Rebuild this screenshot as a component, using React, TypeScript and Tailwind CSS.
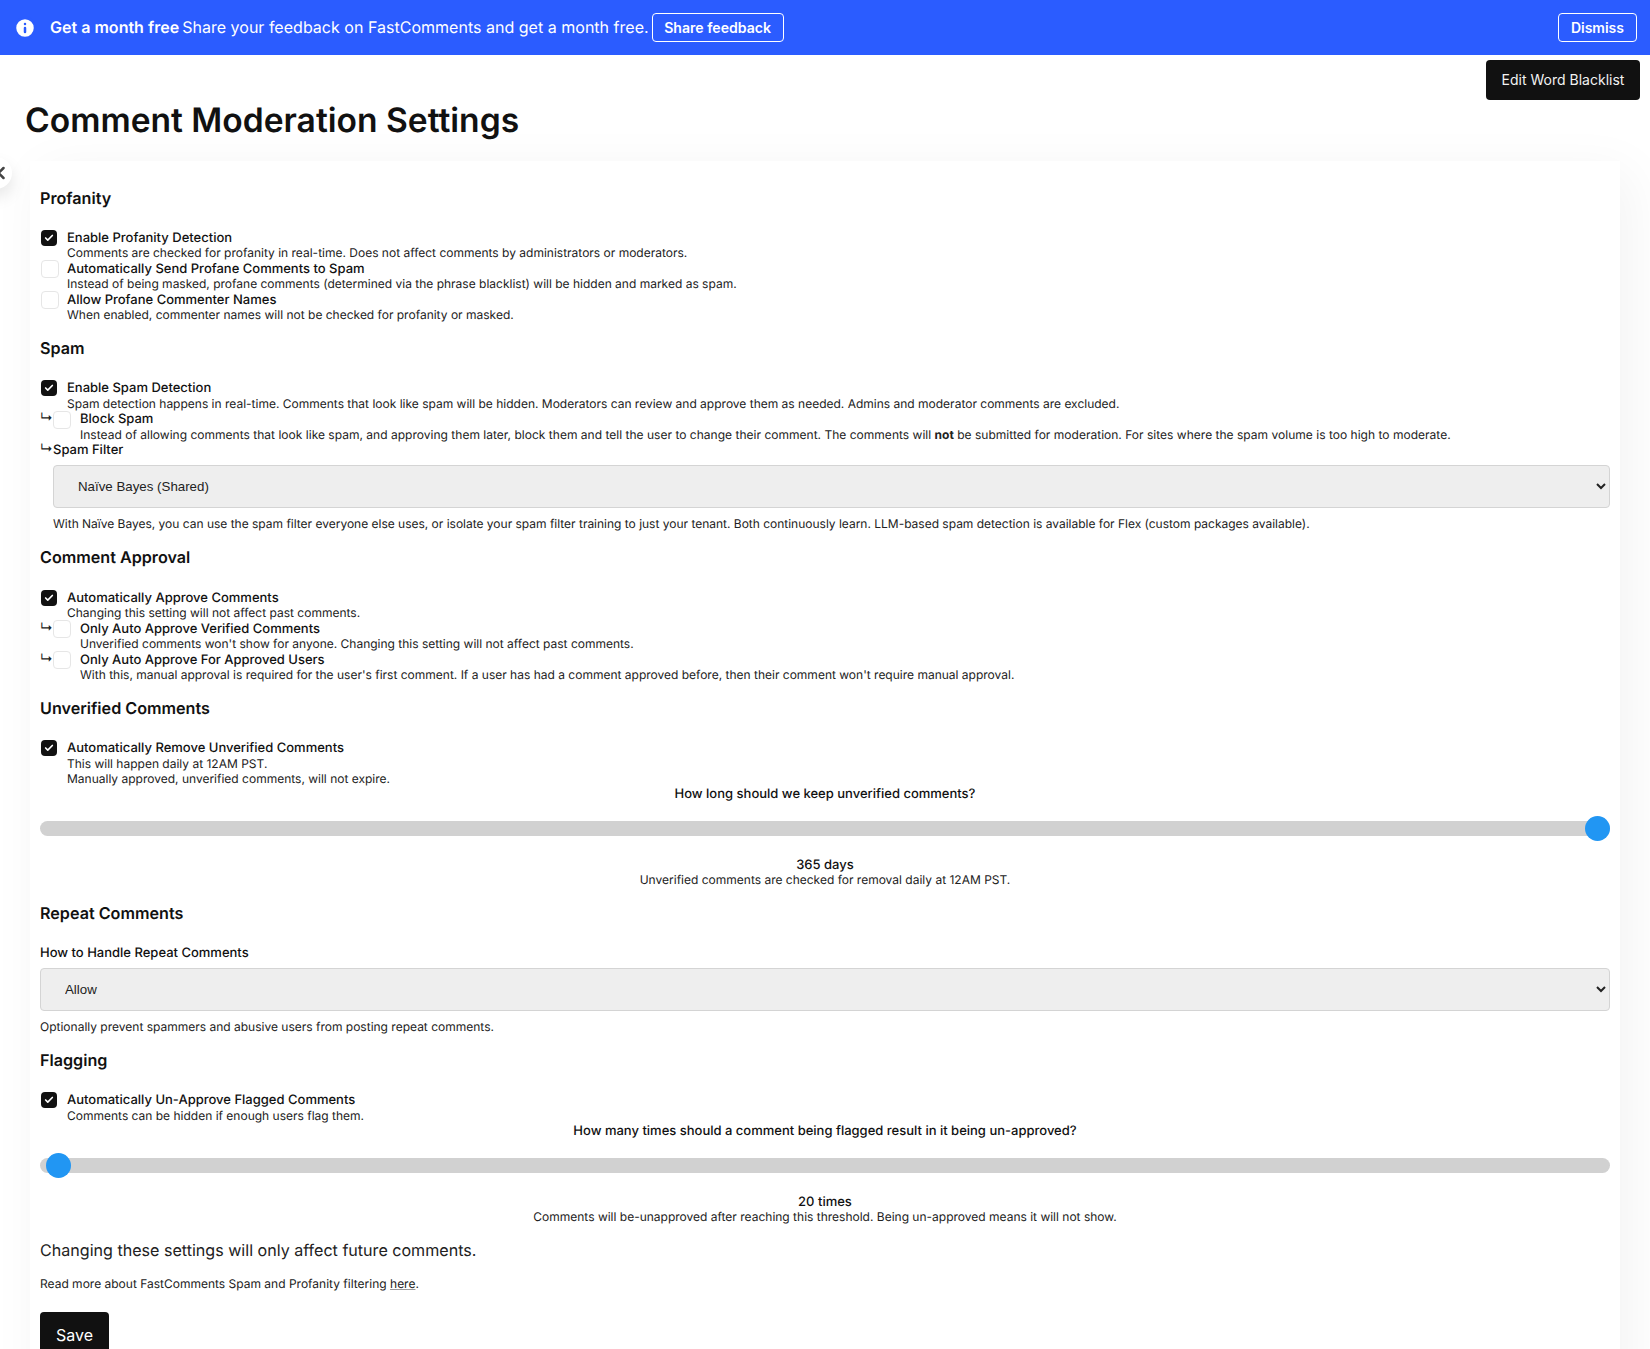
import { Check, Info, ChevronLeft } from 'lucide-react'
import type { ReactNode } from 'react'

function Box({ checked }: { checked?: boolean }) {
  return checked ? (
    <span className="flex h-[16px] w-[16px] shrink-0 items-center justify-center rounded-[4px] bg-[#111111]">
      <Check className="h-[10px] w-[10px] text-white" strokeWidth={4} />
    </span>
  ) : (
    <span className="block h-[18px] w-[18px] shrink-0 rounded-[4px] border border-[#e6e6e6] bg-white" />
  )
}

function Option({ checked, label, nested, children }: { checked?: boolean; label: string; nested?: boolean; children: ReactNode }) {
  return (
    <div className="flex items-start">
      {nested && <span className="w-[13px] shrink-0 text-[13px] leading-[15.4px]">↳</span>}
      <div className={checked ? 'ml-[1px] w-[26px] shrink-0' : nested ? 'w-[27px] shrink-0 -mt-[0.5px]' : 'ml-[1px] w-[26px] shrink-0 -mt-[0.5px]'}>
        <Box checked={checked} />
      </div>
      <div>
        <div className="mt-[1px] -mb-[1px] text-[13px] font-medium text-[#111111]">{label}</div>
        <div>{children}</div>
      </div>
    </div>
  )
}

function Heading({ children }: { children: ReactNode }) {
  return <h2 className="mt-[15.5px] mb-[22.5px] text-[16.15px] font-semibold leading-[20px] text-[#111111]">{children}</h2>
}

function Slider({ at, label, value, note, className }: { at: 'start' | 'end'; label: string; value: string; note: string; className?: string }) {
  return (
    <div className={'text-center ' + (className ?? '')}>
      <div className="-mt-[1px] text-[13px] font-medium leading-[16px] text-[#111111]">{label}</div>
      <div className="relative mt-[19px] h-[15px] rounded-[8px] bg-[#d1d1d1]">
        <span
          className={
            at === 'end'
              ? 'absolute right-0 top-[-5px] h-[25px] w-[25px] rounded-full bg-[#2196f3]'
              : 'absolute left-[6px] top-[-5px] h-[25px] w-[25px] rounded-full bg-[#2196f3]'
          }
        />
      </div>
      <div className="mt-[22px] -mb-[1px] text-[13px] font-medium text-[#111111]">{value}</div>
      <div>{note}</div>
    </div>
  )
}

export default function App() {
  return (
    <div className="relative h-[1349px] overflow-hidden bg-white font-['Inter',sans-serif] text-[12px] leading-[15.4px] text-[#222222] [text-rendering:geometricPrecision]">
      <div className="flex h-[55px] items-center bg-[#2b5cff] pl-[13px] pr-[13px] text-white">
        <Info className="h-[24px] w-[24px] fill-white text-[#2b5cff]" strokeWidth={2.5} />
        <div className="ml-[13px] flex items-center text-[16.05px]">
          <span className="font-semibold">Get a month free</span>
          <span className="ml-[3px]">Share your feedback on FastComments and get a month free.</span>
        </div>
        <button className="ml-[3px] h-[29px] w-[132px] rounded-[4px] border border-white text-[14.1px] font-semibold">Share feedback</button>
        <button className="ml-auto h-[29px] rounded-[4px] border border-white px-[12px] text-[14px] font-semibold">Dismiss</button>
      </div>

      <div className="flex justify-end pr-[10px] pt-[5px]">
        <button className="h-[40px] w-[154px] rounded-[4px] bg-[#111111] text-[14px] font-normal text-[#f2f2f2]">Edit Word Blacklist</button>
      </div>
      <h1 className="ml-[25px] mt-[1px] text-[33.6px] font-semibold leading-[40px] text-[#111111]">Comment Moderation Settings</h1>

      <button className="absolute left-[-20px] top-[157px] z-10 flex h-[32px] w-[32px] items-center justify-end rounded-full bg-white pr-[1.5px] shadow-[0_8px_16px_rgba(0,0,0,0.1)]">
        <ChevronLeft className="h-[20px] w-[20px] text-[#444444]" strokeWidth={3} />
      </button>

      <div className="mx-[30px] mt-[20px] bg-white px-[10px] pb-[60px] pt-[11px] shadow-[10px_10px_50px_rgba(0,0,0,0.05)]">
        <Heading>Profanity</Heading>
        <Option checked label="Enable Profanity Detection">Comments are checked for profanity in real-time. Does not affect comments by administrators or moderators.</Option>
        <Option label="Automatically Send Profane Comments to Spam">Instead of being masked, profane comments (determined via the phrase blacklist) will be hidden and marked as spam.</Option>
        <Option label="Allow Profane Commenter Names">When enabled, commenter names will not be checked for profanity or masked.</Option>

        <Heading>Spam</Heading>
        <Option checked label="Enable Spam Detection">Spam detection happens in real-time. Comments that look like spam will be hidden. Moderators can review and approve them as needed. Admins and moderator comments are excluded.</Option>
        <Option nested label="Block Spam">
          <span className="tracking-[0.017px]">
            Instead of allowing comments that look like spam, and approving them later, block them and tell the user to change their comment. The comments will <b>not</b> be submitted for moderation. For sites where the spam volume is too high to moderate.
          </span>
        </Option>
        <div className="flex items-start">
          <span className="w-[13px] shrink-0 text-[13px] leading-[15.4px]">↳</span>
          <div className="min-w-0 flex-1">
            <div className="mt-[1px] -mb-[1px] text-[13px] font-medium text-[#111111]">Spam Filter</div>
            <select className="mt-[8px] block h-[43px] w-full rounded-[4px] border border-[#d4d4d4] bg-[#eeeeee] pl-[20px] text-[13.3px] text-[#222222] [font-family:'Liberation_Sans',sans-serif]">
              <option>Naïve Bayes (Shared)</option>
            </select>
            <div className="mt-[8px] tracking-[-0.009px]">With Naïve Bayes, you can use the spam filter everyone else uses, or isolate your spam filter training to just your tenant. Both continuously learn. LLM-based spam detection is available for Flex (custom packages available).</div>
          </div>
        </div>

        <Heading>Comment Approval</Heading>
        <Option checked label="Automatically Approve Comments">Changing this setting will not affect past comments.</Option>
        <Option nested label="Only Auto Approve Verified Comments">Unverified comments won't show for anyone. Changing this setting will not affect past comments.</Option>
        <Option nested label="Only Auto Approve For Approved Users">With this, manual approval is required for the user's first comment. If a user has had a comment approved before, then their comment won't require manual approval.</Option>

        <Heading>Unverified Comments</Heading>
        <Option checked label="Automatically Remove Unverified Comments">
          This will happen daily at 12AM PST.<br />Manually approved, unverified comments, will not expire.
        </Option>
        <Slider at="end" label="How long should we keep unverified comments?" value="365 days" note="Unverified comments are checked for removal daily at 12AM PST." />

        <Heading>Repeat Comments</Heading>
        <div className="pt-[1px] -mb-[1px] text-[13px] font-medium text-[#111111]">How to Handle Repeat Comments</div>
        <select className="mt-[7px] block h-[43px] w-full rounded-[4px] border border-[#d4d4d4] bg-[#eeeeee] pl-[20px] text-[13.3px] text-[#222222] [font-family:'Liberation_Sans',sans-serif]">
          <option>Allow</option>
        </select>
        <div className="mt-[8px]">Optionally prevent spammers and abusive users from posting repeat comments.</div>

        <Heading>Flagging</Heading>
        <Option checked label="Automatically Un-Approve Flagged Comments">Comments can be hidden if enough users flag them.</Option>
        <Slider className="mt-[1px]" at="start" label="How many times should a comment being flagged result in it being un-approved?" value="20 times" note="Comments will be-unapproved after reaching this threshold. Being un-approved means it will not show." />

        <p className="mt-[15px] text-[16.08px] leading-[20px]">Changing these settings will only affect future comments.</p>
        <p className="mt-[16px]">
          Read more about FastComments Spam and Profanity filtering <a className="underline decoration-[#999999]">here</a>.
        </p>
        <button className="mt-[21px] h-[48px] rounded-[4px] bg-[#111111] px-[16px] text-[16px] font-normal text-white">Save</button>
      </div>
    </div>
  )
}
